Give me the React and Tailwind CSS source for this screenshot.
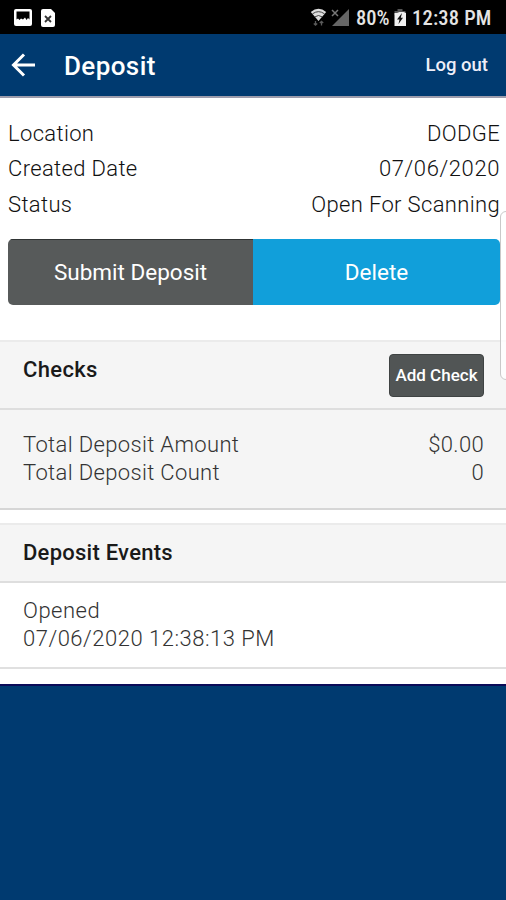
const detalles = [
  { label: 'Location', value: 'DODGE' },
  { label: 'Created Date', value: '07/06/2020', cls: 'tracking-[0.6px]' },
  { label: 'Status', value: 'Open For Scanning' },
]

const totals = [
  { label: 'Total Deposit Amount', value: '$0.00' },
  { label: 'Total Deposit Count', value: '0' },
]

function StatusBar() {
  return (
    <div className="h-[34px] bg-black flex items-center justify-between pl-[14px] pr-[14px] text-[#e4e4e4]">
      <div className="flex items-center gap-[9px] pt-px">
        <svg width="18" height="17" viewBox="0 0 18 17">
          <rect width="18" height="17" rx="2" fill="#fff" />
          <path d="M2.500 2.500h13v8l-1.500-1.500-1.500 2-1.500-2.500-2 2-2-1-1.500 1.500-1.500-1.500-1.500 1z" fill="#000" />
        </svg>
        <svg width="14" height="18" viewBox="0 0 14 18">
          <path d="M2 0h8l4 4v12a2 2 0 0 1-2 2H2a2 2 0 0 1-2-2V2a2 2 0 0 1 2-2z" fill="#fff" />
          <path d="M4 7l6 6M10 7l-6 6" stroke="#333" strokeWidth="1.800" />
        </svg>
      </div>
      <div className="flex items-center">
        <svg width="17" height="19" viewBox="0 0 17 19" fill="none" stroke="#e4e4e4">
          <path d="M0.800 4Q8.500-2.500 16.200 4L8.500 13z" fill="#dedede" stroke="none" />
          <path d="M2.500 5.800q6-4.300 12 0M5 8.800q3.500-2.600 7 0" stroke="#333" strokeWidth="0.900" />
          <path d="M5.500 13v4M3.800 15.500l1.700 1.700 1.700-1.700M11.500 17.500v-4M9.800 15l1.700-1.700 1.700 1.700" stroke="#5a5a5a" strokeWidth="1.300" />
        </svg>
        <svg className="ml-1" width="19" height="19" viewBox="0 0 19 19">
          <path d="M18 1v17H1z" fill="#666" />
          <path d="M1 2l6 6M7 2l-6 6" stroke="#777" strokeWidth="1.500" />
        </svg>
        <span className="ml-[6px] mt-[2px] w-[34px] text-[20.5px] leading-none font-medium whitespace-nowrap [font-family:'Roboto_Condensed',Roboto,sans-serif] [font-stretch:75%]">80%</span>
        <svg className="ml-[4px]" width="12" height="19" viewBox="0 0 12 19">
          <path d="M3.500 1h5v2h3v4H0.500V3h3z" fill="#555" />
          <path d="M0.500 5H3l2.500-1h4L12 5v13H0.500z" fill="#f0f0f0" />
          <path d="M8 5L3 11.500h2.500L4.500 16 9 9.800H6.800z" fill="#111" />
        </svg>
        <span className="ml-[6px] mt-[2px] w-[80px] text-[20.5px] leading-none font-medium tracking-[0.2px] whitespace-nowrap [font-family:'Roboto_Condensed',Roboto,sans-serif] [font-stretch:75%]">12:38 PM</span>
      </div>
    </div>
  )
}

function Header() {
  return (
    <header className="h-[64px] bg-[#003a70] border-b-2 border-[#9c9cac] flex items-center pl-[11px] pr-[18px] text-white">
      <button aria-label="Back">
        <svg width="24" height="24" viewBox="0 0 24 24" fill="none" stroke="currentColor" strokeWidth="3">
          <path d="M24 12H2.500M13 1.500L2.500 12 13 22.500" />
        </svg>
      </button>
      <h1 className="ml-[29px] mt-px text-[26px] leading-none font-medium tracking-[0.4px]">Deposit</h1>
      <button className="ml-auto text-[18.500px] leading-none font-medium text-[#eeeef8]">Log out</button>
    </header>
  )
}

export default function App() {
  return (
    <div className="relative w-[506px] h-[900px] overflow-hidden bg-[#003a70] [font-family:Roboto,sans-serif]">
      <StatusBar />
      <Header />

      <main className="h-[588px] bg-white border-b-2 border-[#0b0b58]">
        <dl className="pt-[18px] pl-2 pr-[6px] text-[22px] leading-[35.3px] font-light tracking-[0.35px] text-[#111]">
          {detalles.map((d) => (
            <div key={d.label} className="flex justify-between">
              <dt>{d.label}</dt>
              <dd className={d.cls}>{d.value}</dd>
            </div>
          ))}
        </dl>

        <div className="mt-[17px] ml-2 mr-[6px] h-[66px] flex rounded-[5px] overflow-hidden text-[22.5px] text-white">
          <button className="w-[245px] pt-px bg-[#575a5a] border-t border-[#303434]">Submit Deposit</button>
          <button className="flex-1 pt-[2px] bg-[#119fda]">Delete</button>
        </div>

        <section className="mt-[35px] bg-[#f5f5f5] border-t-2 border-b-2 border-t-[#ebebeb] border-b-[#d6d6d6]">
          <div className="h-[68px] flex items-start justify-between pl-[23px] pr-[22px] border-b-2 border-[#dedede]">
            <h2 className="mt-[14px] text-[22px] leading-[28px] font-medium tracking-[0.35px] text-[#1a1a1a]">Checks</h2>
            <button className="mt-[12px] pt-px w-[95px] h-[43px] rounded-[4px] bg-[#515555] border border-[#3f4343] text-[17px] font-medium text-white whitespace-nowrap">Add Check</button>
          </div>
          <dl className="h-[98px] pt-[21px] pl-[23px] pr-[22px] text-[22px] leading-[28px] font-light tracking-[0.35px] text-[#333]">
            {totals.map((t) => (
              <div key={t.label} className="flex justify-between">
                <dt>{t.label}</dt>
                <dd>{t.value}</dd>
              </div>
            ))}
          </dl>
        </section>

        <section className="mt-[13px] border-b-2 border-[#e0e0e0]">
          <h2 className="h-[60px] pl-[23px] pt-[14px] bg-[#f5f5f5] border-t-2 border-b-2 border-t-[#ebebeb] border-b-[#dedede] text-[22px] leading-[28px] font-medium tracking-[0.25px] text-[#1a1a1a]">Deposit Events</h2>
          <div className="h-[84px] pt-[14px] pl-[23px] text-[22px] leading-[28px] font-light tracking-[0.5px] text-[#333]">
            <p>Opened</p>
            <p>07/06/2020 12:38:13 PM</p>
          </div>
        </section>
      </main>

      {/* edge panel handle */}
      <div className="absolute left-[500px] top-[211px] w-[14px] h-[169px] rounded-[6px] border border-[#c9c9c9] bg-white/80" />
    </div>
  )
}
